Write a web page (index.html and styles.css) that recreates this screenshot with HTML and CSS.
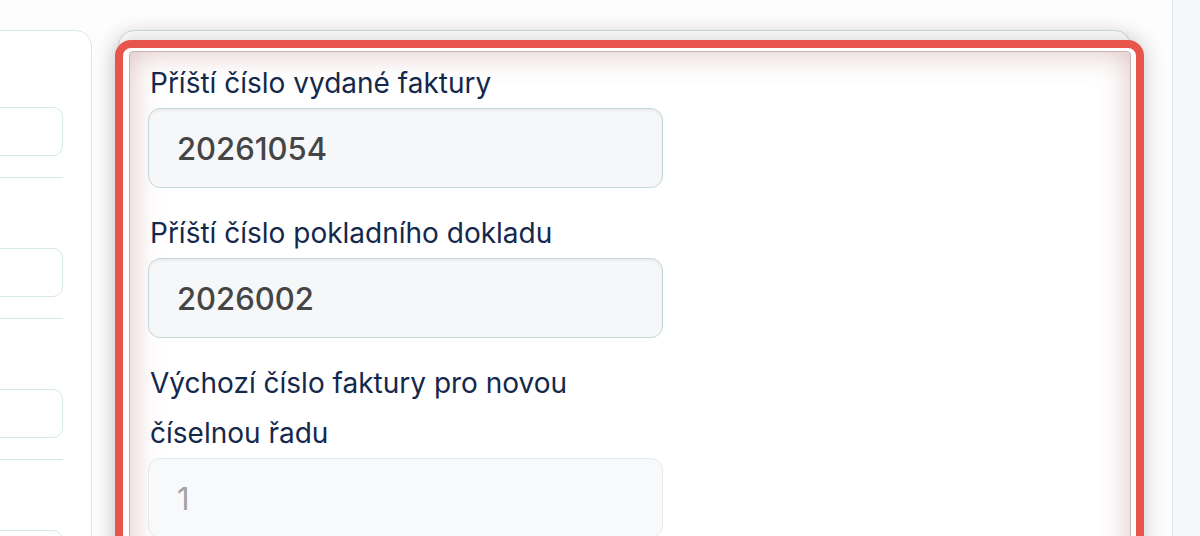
FILE: index.html
```html
<!DOCTYPE html>
<html lang="cs">
  <head>
    <meta charset="UTF-8" />
    <meta name="viewport" content="width=device-width, initial-scale=1.0" />
    <title>Nastavení číselných řad</title>
    <link rel="stylesheet" href="styles.css">
  </head>
  <body>
    <div class="page">
      <!-- Left settings column (mostly scrolled out of view) -->
      <aside class="side-card">
        <div class="side-row"><input class="side-input" type="text" /></div>
        <div class="side-row"><input class="side-input" type="text" /></div>
        <div class="side-row"><input class="side-input" type="text" /></div>
        <div class="side-row"><input class="side-input" type="text" /></div>
      </aside>

      <!-- Numbering card, highlighted -->
      <main class="settings-card">
        <div class="highlight">
          <div class="highlight-inner">
            <div class="field">
              <label for="invoiceNo">Příští číslo vydané faktury</label>
              <input id="invoiceNo" class="field-input" type="text" value="20261054" />
            </div>
            <div class="field">
              <label for="cashNo">Příští číslo pokladního dokladu</label>
              <input id="cashNo" class="field-input" type="text" value="2026002" />
            </div>
            <div class="field">
              <label for="startNo">Výchozí číslo faktury pro novou číselnou řadu</label>
              <input id="startNo" class="field-input" type="text" value="1" disabled />
            </div>
          </div>
        </div>
      </main>

      <div class="side-strip"></div>
    </div>
  </body>
</html>
```

FILE: styles.css
```css
body {
  margin: 0;
  padding: 0;
  background-color: #fdfdfd;
  font-family: Inter, "Noto Sans", Arial, sans-serif;
}

.page {
  display: flex;
  align-items: flex-start;
  height: 536px;
  overflow: hidden;
  padding-top: 30px;
  box-sizing: border-box;
}

/* Left column card */
.side-card {
  flex: 0 0 292px;
  margin-left: -200px;
  margin-right: 26px;
  height: 600px;
  padding-top: 6px;
  box-sizing: border-box;
  background-color: #fff;
  border: 1px solid #d7e8e8;
  border-radius: 16px;
}

.side-row {
  display: flex;
  justify-content: flex-end;
  margin-right: 28px;
  padding: 70px 0 21px;
  border-bottom: 1px solid #d7e8e8;
}

.side-input {
  width: 160px;
  height: 49px;
  box-sizing: border-box;
  border: 1px solid #d7e8e8;
  border-radius: 10px;
  background-color: #fff;
}

/* Numbering card */
.settings-card {
  flex: 0 0 1013px;
  height: 600px;
  padding-top: 9px;
  box-sizing: border-box;
  background-color: #fff;
  border: 1px solid #cdd9db;
  border-radius: 16px;
  box-shadow: 0 0 22px rgba(0, 0, 0, 0.08);
}

.highlight {
  margin: 0 -14px 0 -4px;
  height: 620px;
  padding: 3px 5px 0 6px;
  box-sizing: border-box;
  background-color: #fff;
  border: 8px solid #e8554a;
  border-radius: 16px;
  box-shadow: 0 0 22px rgba(0, 0, 0, 0.2);
}

.highlight-inner {
  height: 100%;
  padding: 6px 0 0 18px;
  box-sizing: border-box;
  border: 1px solid #c5b6b6;
  border-radius: 4px;
  box-shadow: inset 0 0 30px rgba(160, 80, 80, 0.36);
}

.field {
  width: 515px;
  margin-bottom: 20px;
}

.field label {
  display: block;
  padding-left: 2px;
  font-size: 28px;
  line-height: 50px;
  color: #14284b;
}

.field-input {
  display: block;
  width: 100%;
  height: 80px;
  box-sizing: border-box;
  padding: 0 28px;
  font-family: Inter, "Noto Sans", Arial, sans-serif;
  font-size: 31px;
  font-weight: 500;
  color: #454545;
  background-color: #f5f7f9;
  border: 1.5px solid #c6d7da;
  border-radius: 12px;
  box-shadow: inset 0 2px 3px rgba(0, 0, 0, 0.05);
  outline: none;
}

.field-input:disabled {
  font-weight: 400;
  color: #a3a3a3;
  background-color: #f8f9fb;
  border-color: #e4e9eb;
  box-shadow: none;
}

/* Right edge panel */
.side-strip {
  flex: 0 0 28px;
  margin-left: 41px;
  margin-top: -30px;
  height: 536px;
  background-color: #f5f7f9;
  border-left: 1px solid #d7e6e8;
}
```
